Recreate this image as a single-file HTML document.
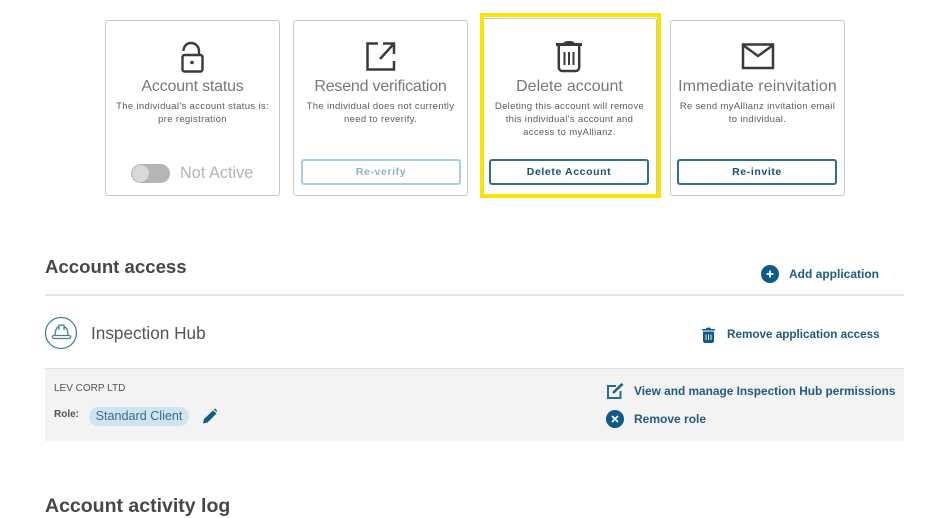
<!DOCTYPE html>
<html lang="en"><head><meta charset="utf-8"><title>Account</title>
<style>
html,body{margin:0;padding:0;background:#fff}
body{width:928px;height:516px;overflow:hidden;position:relative;font-family:"Liberation Sans",sans-serif}
#p{position:absolute;left:0;top:0;width:928px;height:516px;filter:blur(.35px)}
.a{position:absolute;white-space:nowrap}
.card{position:absolute;top:20px;width:173px;height:174px;border:1px solid #c8c8c8;border-radius:3px;background:#fff}
.t{position:absolute;top:77px;width:175px;text-align:center;font-size:16px;line-height:20px;color:#787878;white-space:nowrap}
.d{position:absolute;top:100px;width:175px;text-align:center;font-size:9.500px;line-height:13px;color:#5c5c5c;white-space:nowrap;letter-spacing:.33px}
.b{position:absolute;top:159px;width:156px;height:22px;border:2px solid #2f6f8f;border-radius:3px;text-align:center;font-size:10.500px;font-weight:bold;line-height:22px;color:#1d4f70;letter-spacing:.6px;background:#fff}
.l{font-size:12px;font-weight:bold;color:#1f5b7e;line-height:16px}
svg{position:absolute;overflow:visible}
</style></head><body><div id="p">
<div class="card" style="left:105px"></div>
<div class="card" style="left:293px"></div>
<div class="card" style="left:482px;top:18px;height:176px"></div>
<div class="card" style="left:670px"></div>
<div class="a" style="left:480px;top:13px;width:173px;height:177px;border:4px solid #f9e300"></div>

<svg style="left:180px;top:41px" width="24" height="32" fill="none" stroke="#3a3a3a" stroke-width="2.400"><path d="M3.500 10C3.500 5 7 2 11 2C15.500 2 19 5.500 19 10V14"/><rect x="2.500" y="14" width="20" height="16.500" rx="2"/><circle cx="12" cy="21.500" r="1.800" fill="#3a3a3a" stroke="none"/></svg>
<svg style="left:365px;top:41px" width="32" height="32" fill="none" stroke="#3a3a3a" stroke-width="2.500"><path d="M13 2.500H2.500V28.500H29V20M18 2.500H29V13M29 2.500L15 18"/></svg>
<svg style="left:555px;top:40px" width="28" height="34" fill="none" stroke="#3a3a3a" stroke-width="2.500"><path d="M1 4.500H27" stroke-width="3"/><path d="M9.500 3.500C9.500 1.500 18.500 1.500 18.500 3.500" stroke-width="2"/><path d="M3.800 6V27C3.800 29.500 5.500 31 7.500 31H20.500C22.500 31 24.200 29.500 24.200 27V6"/><path d="M9.500 12V25M14 12V25M18.500 12V25" stroke-width="2"/></svg>
<svg style="left:741px;top:43px" width="34" height="26" fill="none" stroke="#3a3a3a" stroke-width="2.500"><rect x="2" y="1.500" width="30" height="23.500"/><path d="M2.500 2.500L17 13L31.500 2.500"/></svg>

<div class="t" style="left:105px;letter-spacing:-.2px">Account status</div>
<div class="t" style="left:293px;letter-spacing:-.2px">Resend verification</div>
<div class="t" style="left:482px">Delete account</div>
<div class="t" style="left:670px;letter-spacing:.1px">Immediate reinvitation</div>

<div class="d" style="left:105px">The individual's account status is:<br>pre registration</div>
<div class="d" style="left:293px">The individual does not currently<br>need to reverify.</div>
<div class="d" style="left:482px">Deleting this account will remove<br>this individual's account and<br>access to myAllianz.</div>
<div class="d" style="left:670px">Re send myAllianz invitation email<br>to individual.</div>

<div class="a" style="left:131px;top:164px;width:39px;height:19px;border-radius:10px;background:#b5b5b5"></div>
<div class="a" style="left:132px;top:165px;width:17px;height:17px;border-radius:50%;background:#d9d9d9"></div>
<div class="a" style="left:180px;top:163px;font-size:16.300px;line-height:20px;color:#b4b4b4">Not Active</div>

<div class="b" style="left:301px;border-color:#a9cfdc;color:#8fb3c6">Re-verify</div>
<div class="b" style="left:489px">Delete Account</div>
<div class="b" style="left:677px">Re-invite</div>

<div class="a" style="left:45px;top:255px;font-size:18.600px;font-weight:bold;line-height:24px;color:#474747">Account access</div>
<svg style="left:761px;top:265px" width="18" height="18"><circle cx="9" cy="9" r="9" fill="#0f5a87"/><path d="M5.500 9H12.500M9 5.500V12.500" stroke="#fff" stroke-width="1.800"/></svg>
<div class="a l" style="left:789px;top:266px">Add application</div>
<div class="a" style="left:45px;top:294px;width:859px;height:2px;background:#e6e6e6"></div>

<svg style="left:45px;top:317px" width="33" height="33" fill="none" stroke="#4b8198" stroke-width="1.300"><circle cx="16" cy="16" r="15.500"/><path d="M7.500 20.500C7 19.500 7.500 18.500 9 18.500H24C25.500 18.500 26 19.500 25.500 20.500C25 21.500 24.500 21.500 23.500 21.500H9.500C8.500 21.500 8 21.500 7.500 20.500ZM10 18.500C10 14 11.500 10.500 14 9.500V8.200H19V9.500C21.500 10.500 23 14 23 18.500M14 9.500V13M19 9.500V13"/></svg>
<div class="a" style="left:91px;top:323px;font-size:17.200px;line-height:21px;color:#555">Inspection Hub</div>
<svg style="left:701.500px;top:326.500px" width="13" height="16"><path d="M0 2H13V3.500H0ZM4 2C4 0 9 0 9 2Z" fill="#0f5a87"/><path d="M1 4.500H12V14C12 15 11 16 10 16H3C2 16 1 15 1 14Z" fill="#0f5a87"/><path d="M4 7.500V13M6.500 7.500V13M9 7.500V13" stroke="#fff" stroke-width=".9"/></svg>
<div class="a l" style="left:727px;top:327px;font-size:11.700px">Remove application access</div>

<div class="a" style="left:45px;top:368px;width:859px;height:73px;background:#f3f3f3;border-top:1px solid #e2e2e2;box-sizing:border-box"></div>
<div class="a" style="left:54px;top:382px;font-size:10px;line-height:14px;color:#555">LEV CORP LTD</div>
<div class="a" style="left:54px;top:408px;font-size:10px;font-weight:bold;line-height:14px;color:#555">Role:</div>
<div class="a" style="left:89px;top:407px;width:100px;height:19px;border-radius:10px;background:#cfe5ee;text-align:center;font-size:12.600px;line-height:19px;color:#3f6b80">Standard Client</div>
<svg style="left:202px;top:408px" width="15" height="16" fill="none"><path d="M1 15.500L2 11L11 2.500L14.500 5.500L5.500 14.500Z" fill="#0f5a87"/><path d="M11.800 1.500L13 .5L15 2.500L14.500 4Z" fill="#0f5a87"/></svg>

<svg style="left:607px;top:383px" width="17" height="16" fill="none" stroke="#2a6c92" stroke-width="2"><path d="M9 3H1V15H13.500V8"/><path d="M6 10L15.500 .8" stroke-width="2.600" stroke="#1f6288"/></svg>
<div class="a l" style="left:634px;top:383px;font-size:11.870px">View and manage Inspection Hub permissions</div>
<svg style="left:605.500px;top:409.500px" width="18" height="18"><circle cx="9" cy="9" r="9" fill="#0f5a87"/><path d="M6 6L12 12M12 6L6 12" stroke="#fff" stroke-width="1.700"/></svg>
<div class="a l" style="left:634px;top:411px">Remove role</div>

<div class="a" style="left:45px;top:494px;font-size:19.500px;font-weight:bold;line-height:24px;color:#474747">Account activity log</div>
</div></body></html>
